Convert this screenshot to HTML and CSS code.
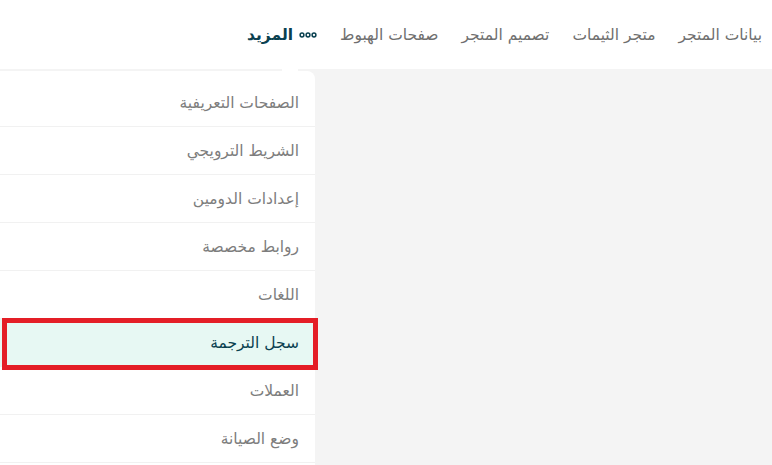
FILE: index.html
```html
<!DOCTYPE html>
<html lang="ar" dir="rtl">
<head>
<meta charset="utf-8">
<title>القائمة</title>
<link rel="stylesheet" href="styles.css">
</head>
<body>
<header class="topbar">
  <nav class="nav">
    <a class="nav-item">بيانات المتجر</a>
    <a class="nav-item">متجر الثيمات</a>
    <a class="nav-item">تصميم المتجر</a>
    <a class="nav-item">صفحات الهبوط</a>
    <a class="nav-item nav-more">
      <svg class="dots" width="18" height="6" viewBox="0 0 18 6" aria-hidden="true">
        <circle cx="3" cy="3" r="1.9" fill="none" stroke="#0a4150" stroke-width="1.5"/>
        <circle cx="9" cy="3" r="1.9" fill="none" stroke="#0a4150" stroke-width="1.5"/>
        <circle cx="15" cy="3" r="1.9" fill="none" stroke="#0a4150" stroke-width="1.5"/>
      </svg>
      <span>المزيد</span>
    </a>
  </nav>
</header>
<main class="content">
  <div class="dropdown">
    <ul class="menu">
      <li class="menu-item">الصفحات التعريفية</li>
      <li class="menu-item">الشريط الترويجي</li>
      <li class="menu-item">إعدادات الدومين</li>
      <li class="menu-item">روابط مخصصة</li>
      <li class="menu-item">اللغات</li>
      <li class="menu-item active">سجل الترجمة</li>
      <li class="menu-item">العملات</li>
      <li class="menu-item">وضع الصيانة</li>
    </ul>
  </div>
</main>
</body>
</html>
```
FILE: styles.css
```css
html, body {
  margin: 0;
  padding: 0;
}
body {
  width: 772px;
  height: 465px;
  overflow: hidden;
  background: #f4f4f4;
  font-family: "DejaVu Sans", "Noto Sans", sans-serif;
  display: flex;
  flex-direction: column;
}
.topbar {
  height: 69px;
  flex: none;
  background: #ffffff;
  display: flex;
  align-items: center;
  padding-right: 10px;
}
.nav {
  display: flex;
  align-items: center;
  gap: 23px;
}
.nav-item {
  font-size: 15.5px;
  color: #6f6f6f;
  white-space: nowrap;
  display: flex;
  align-items: center;
}
.nav-more {
  color: #0a4150;
  font-weight: bold;
  gap: 6px;
}
.dots {
  display: block;
}
.content {
  flex: 1;
  display: flex;
  justify-content: flex-end;
  padding-top: 2px;
}
.dropdown {
  position: relative;
  width: 315px;
  background: #ffffff;
  border-top-right-radius: 8px;
  padding-top: 8px;
}
.dropdown::before {
  content: "";
  position: absolute;
  top: -3px;
  left: 282px;
  width: 16px;
  height: 6px;
  background: #ffffff;
}
.menu {
  list-style: none;
  margin: 0;
  padding: 0;
}
.menu-item {
  height: 48px;
  box-sizing: border-box;
  display: flex;
  align-items: center;
  padding-right: 16px;
  font-size: 15.5px;
  color: #7d7d7d;
  border-bottom: 1px solid #f1f1f1;
}
.menu-item.active {
  position: relative;
  background: #e7f8f3;
  color: #0a4150;
  border-bottom-color: transparent;
}
.menu-item.active::after {
  content: "";
  position: absolute;
  left: 2px;
  top: -1px;
  width: 316px;
  height: 52px;
  box-sizing: border-box;
  border: 5px solid #e41e26;
}
```
